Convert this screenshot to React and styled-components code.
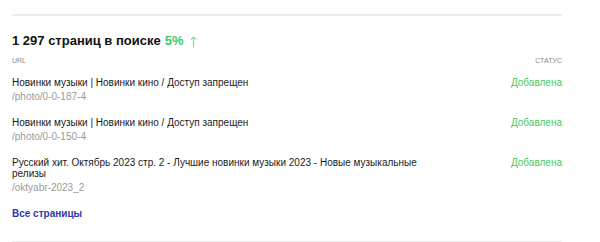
import styled, { createGlobalStyle } from "styled-components";

const Global = createGlobalStyle`
  html, body {
    margin: 0;
    padding: 0;
    background: #fff;
  }
  body {
    font-family: "Liberation Sans", Arial, sans-serif;
  }
`;

const Panel = styled.div`
  width: 550px;
  margin-left: 12px;
  padding-top: 14px;
`;

const Divider = styled.div`
  height: 2px;
  background: #ececec;
`;

const Title = styled.h2`
  display: flex;
  align-items: center;
  margin: 0;
  padding-top: 16px;
  font-size: 13px;
  line-height: 18px;
  font-weight: bold;
  color: #111;
`;

const Growth = styled.span`
  color: #3fc864;
  margin-left: 4px;
`;

const Arrow = styled.svg`
  margin-left: 6px;
  margin-top: 1px;
`;

const HeadRow = styled.div`
  display: flex;
  justify-content: space-between;
  margin-top: 6px;
  font-size: 7px;
  line-height: 9px;
  color: #8a8a8a;
  text-transform: uppercase;
`;

const Row = styled.div`
  display: flex;
  justify-content: space-between;
  align-items: flex-start;
  margin-top: ${(p) => p.$gap}px;
`;

const Info = styled.div`
  max-width: 412px;
`;

const PageName = styled.div`
  font-size: 10px;
  line-height: 11px;
  color: #1a1a1a;
`;

const Path = styled.div`
  margin-top: 3px;
  font-size: 10px;
  line-height: 12px;
  color: #9a9a9a;
`;

const Status = styled.div`
  font-size: 10px;
  line-height: 11px;
  color: #4cc95c;
`;

const AllLink = styled.a`
  display: block;
  margin-top: 14px;
  font-size: 10px;
  line-height: 12px;
  font-weight: bold;
  color: #2a3aa8;
  text-decoration: none;
`;

const Bottom = styled(Divider)`
  margin-top: 21px;
`;

const pages = [
  { name: "Новинки музыки | Новинки кино / Доступ запрещен", path: "/photo/0-0-187-4", gap: 12 },
  { name: "Новинки музыки | Новинки кино / Доступ запрещен", path: "/photo/0-0-150-4", gap: 14 },
  {
    name: "Русский хит. Октябрь 2023 стр. 2 - Лучшие новинки музыки 2023 - Новые музыкальные релизы",
    path: "/oktyabr-2023_2",
    gap: 14,
  },
];

export default function App() {
  return (
    <>
      <Global />
      <Panel>
        <Divider />
        <Title>
          1 297 страниц в поиске<Growth>5%</Growth>
          <Arrow width="7" height="12" viewBox="0 0 7 12" fill="none" stroke="#8adb98" strokeWidth="1.2">
            <path d="M3.5 11.5V1M1 3.6L3.5 1L6 3.6" />
          </Arrow>
        </Title>
        <HeadRow>
          <span>URL</span>
          <span>Статус</span>
        </HeadRow>
        {pages.map((p, i) => (
          <Row key={i} $gap={p.gap}>
            <Info>
              <PageName>{p.name}</PageName>
              <Path>{p.path}</Path>
            </Info>
            <Status>Добавлена</Status>
          </Row>
        ))}
        <AllLink href="#">Все страницы</AllLink>
        <Bottom />
      </Panel>
    </>
  );
}
